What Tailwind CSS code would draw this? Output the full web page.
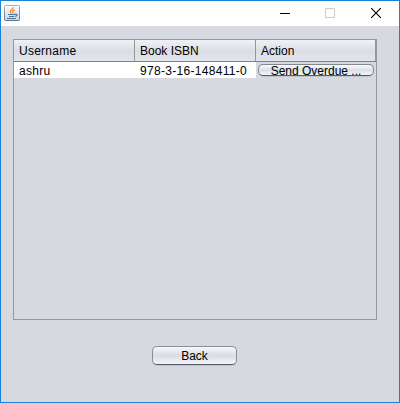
<!DOCTYPE html>
<html lang="en">
<head>
<meta charset="utf-8">
<title>Overdue books</title>
<script src="https://cdn.jsdelivr.net/npm/@tailwindcss/browser@4"></script>
</head>
<body class="w-[400px] h-[403px] overflow-hidden font-['Liberation_Sans',Arial,sans-serif] text-[12px] leading-[14px] text-black">
<div class="flex flex-col w-[400px] h-[403px] border border-[#1883d7] bg-[#d6d9e0]">
  <header class="flex items-start h-[25px] shrink-0 bg-white">
    <svg class="ml-[3px] mt-[4px]" width="16" height="16" viewBox="0 0 16 16">
      <defs><linearGradient id="j" x1="0" y1="0" x2="0" y2="1"><stop offset="0" stop-color="#fbfcfd"/><stop offset="1" stop-color="#cdd8e2"/></linearGradient>
      <linearGradient id="k" x1="0" y1="0" x2="0" y2="1"><stop offset="0" stop-color="#a3b3c0"/><stop offset="1" stop-color="#557690"/></linearGradient></defs>
      <rect x=".5" y=".5" width="15" height="15" rx=".8" fill="url(#j)" stroke="url(#k)"/>
      <path d="M9.300 2.300C9.300 4.300 5.800 4.600 6.200 6.600c.2.800.9 1.100 1.300 1.800M10.800 4.800C8.600 5.400 8.200 6.200 8.800 7c.4.600.3 1-.2 1.400" fill="none" stroke="#ee8a2c" stroke-width="1.200"/>
      <path d="M4 9.500h7M5 11.500h5.300M3 13.500h9" fill="none" stroke="#4c7696" stroke-width="1"/>
      <path d="M11 9.300c2.800-.8 2.500 1.600.2 2.100" fill="none" stroke="#4c7696" stroke-width="1.200"/>
    </svg>
    <svg class="ml-[260px] mt-[7px]" width="10" height="10" viewBox="0 0 10 10"><path d="M0 5.500h10" stroke="#000"/></svg>
    <svg class="ml-[35px] mt-[7px]" width="10" height="10" viewBox="0 0 10 10"><path d="M.5.5h9v9h-9z" fill="none" stroke="#ccc"/></svg>
    <svg class="ml-[36px] mt-[7px]" width="10" height="10" viewBox="0 0 10 10"><path d="M0 0l10 10M10 0L0 10" stroke="#000" stroke-width="1.200"/></svg>
  </header>
  <main class="flex flex-col items-start pl-[12px] pt-[13px]">
    <section class="w-[364px] h-[281px] border border-[#9297a1]">
      <div class="grid grid-cols-[121px_121px_120px] h-[22px] border-b border-[#7d828c] bg-linear-to-b from-[#f1f2f4] via-[#dcdee4] to-[#e1e4eb]">
        <div class="border-r border-[#9297a1] pl-[5px] pt-[4px] tracking-[0.25px]">Username</div>
        <div class="border-r border-[#9297a1] pl-[5px] pt-[4px]">Book ISBN</div>
        <div class="border-r border-[#9297a1] pl-[5px] pt-[4px]">Action</div>
      </div>
      <div class="grid grid-cols-[121px_121px_120px] h-[16px]">
        <div class="bg-white pl-[5px] pt-[2px] tracking-[0.3px]">ashru</div>
        <div class="bg-white pl-[5px] pt-[2px] tracking-[0.3px]">978-3-16-148411-0</div>
        <div class="pl-[2px] pt-[2px]">
          <button class="block w-[116px] h-[12px] rounded-[5px] border border-[#83878f] border-b-[#555a63] bg-linear-to-b from-[#fafbfc] via-[#dcdfe5] to-[#f3f5f8] shadow-[0_1px_0_#c0c4cc] overflow-hidden text-center"><span class="block h-[10px] leading-[13px] whitespace-nowrap">Send Overdue ...</span></button>
        </div>
      </div>
    </section>
    <button class="block ml-[139px] mt-[26px] w-[85px] h-[19px] rounded-[5px] border border-[#8b8f98] border-b-[#555a63] bg-linear-to-b from-[#f7f8fa] via-[#d9dce2] to-[#f3f5fa] text-center leading-[18px] shadow-[0_1px_0_#c0c4cc]">Back</button>
  </main>
</div>
</body>
</html>
